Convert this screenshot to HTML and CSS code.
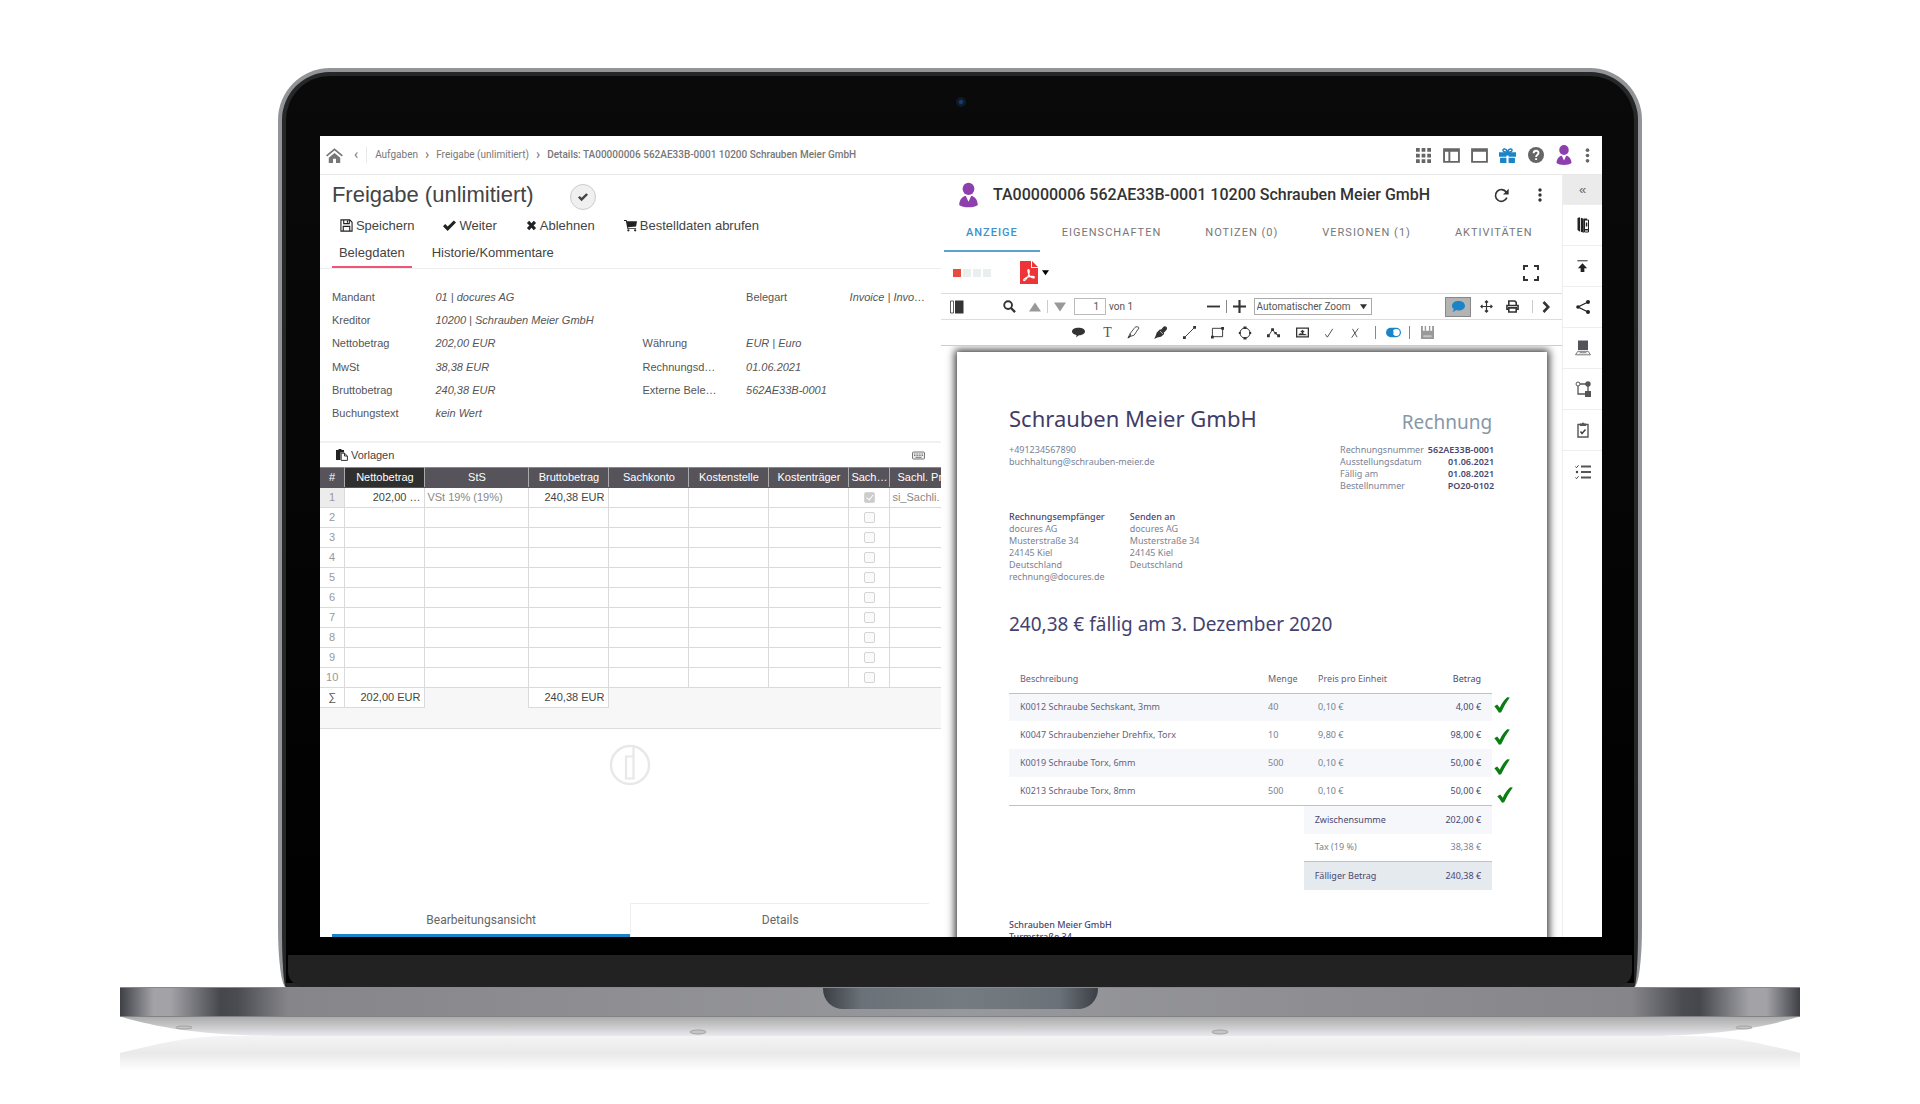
FILE: index.html
```html
<!DOCTYPE html>
<html lang="de">
<head>
<meta charset="utf-8">
<meta name="viewport" content="width=device-width, initial-scale=1">
<title>Freigabe (unlimitiert)</title>
<link rel="stylesheet" href="styles.css">
</head>
<body>
<svg class="sprite" aria-hidden="true">
  <symbol id="home" viewBox="0 0 16 14"><path d="M8 4.6 2.6 9v5h4v-4h2.800v4h4V9z" fill="currentColor"/><path d="M.6 7.400 8 1.300l7.400 6.100" fill="none" stroke="currentColor" stroke-width="1.600"/></symbol>
  <symbol id="person" viewBox="0 0 20 26"><ellipse cx="10" cy="6.500" rx="6.200" ry="6.500" fill="currentColor"/><path d="M6 14h1.200L10 20l2.800-6H14c4 2 5.500 5 5.800 9.500C16 26.700 4 26.700.2 23.500.5 19 2 16 6 14z" fill="currentColor"/></symbol>
  <symbol id="grid" viewBox="0 0 14 14"><path d="M0 0h3.500v3.500H0zM5.250 0h3.500v3.500h-3.500zM10.500 0H14v3.500h-3.500zM0 5.250h3.500v3.500H0zM5.250 5.250h3.500v3.500h-3.500zM10.500 5.250H14v3.500h-3.500zM0 10.500h3.500V14H0zM5.250 10.500h3.500V14h-3.500zM10.500 10.500H14V14h-3.500z" fill="currentColor"/></symbol>
  <symbol id="columns" viewBox="0 0 16 14"><path d="M1 1h14v12H1zM6 3v10M1 2.500h14" fill="none" stroke="currentColor" stroke-width="1.800"/></symbol>
  <symbol id="window" viewBox="0 0 16 14"><path d="M1 1h14v12H1zM1 2.500h14" fill="none" stroke="currentColor" stroke-width="1.800"/></symbol>
  <symbol id="gift" viewBox="0 0 16 14"><path d="M0 4h16v4.200H9V7H7v1.200H0zM1 9.200h6V14H1zM9 9.200h6V14H9z" fill="currentColor"/><path d="M7.500 4C5.500 4 3.500 3.300 3.700 2 4 .4 6.700.3 8 3.600 9.300.3 12 .4 12.300 2c.2 1.300-1.800 2-3.800 2" fill="none" stroke="currentColor" stroke-width="1.400"/></symbol>
  <symbol id="help" viewBox="0 0 16 16"><circle cx="8" cy="8" r="8" fill="currentColor"/><path d="M5.600 6.200C5.600 3 10.500 3 10.500 6c0 1.800-2.400 1.800-2.400 4M8.100 11.300v1.700" fill="none" stroke="#fff" stroke-width="1.900"/></symbol>
  <symbol id="dots" viewBox="0 0 4 14"><circle cx="2" cy="2" r="1.700" fill="currentColor"/><circle cx="2" cy="7" r="1.700" fill="currentColor"/><circle cx="2" cy="12" r="1.700" fill="currentColor"/></symbol>
  <symbol id="check" viewBox="0 0 14 12"><path d="M0 6.800 2.400 4.500 5 7.200 11.600.6 14 2.900 5 11.800z" fill="currentColor"/></symbol>
  <symbol id="cross" viewBox="0 0 12 12"><path d="M1 3.200 3.500.8 6 3.500 8.500.8 11 3.200 8.300 6 11 8.800l-2.500 2.400L6 8.500l-2.500 2.700L1 8.800 3.700 6z" fill="currentColor"/></symbol>
  <symbol id="disk" viewBox="0 0 14 14"><path d="M1 1h9.500L13 3.500V13H1zM3.500 13V8h7v5M4 1v4h6V1M8 2v2" fill="none" stroke="currentColor" stroke-width="1.200"/></symbol>
  <symbol id="cart" viewBox="0 0 14 13"><path d="M0 .5h2.800l.4 1.500H14l-1 5.500-8.600.9.2 1H13v1H3.700L2 1.700H0z" fill="currentColor"/><circle cx="4.700" cy="11.700" r="1.200" fill="currentColor"/><circle cx="12" cy="11.700" r="1.200" fill="currentColor"/></symbol>
  <symbol id="paste" viewBox="0 0 12 12"><path d="M0 1h2.500V0h3v1H8v2.500H4.500V11H0z" fill="#222"/><path d="M5.200 4.200h3.300L11.400 7v4.400H5.200zM8.500 4.200V7h2.900" fill="#fff" stroke="#333" stroke-width="1"/></symbol>
  <symbol id="keyboard" viewBox="0 0 13 8"><rect x=".5" y=".5" width="12" height="7" rx="1" fill="#eee" stroke="#777"/><path d="M2 2.500h9M2 4h9" stroke="#777" stroke-width="1" stroke-dasharray="1 .6"/><path d="M3.500 5.800h6" stroke="#777"/></symbol>
  <symbol id="refresh" viewBox="0 0 14 14"><path d="M12 9a5.500 5.500 0 1 1-.6-5.200" fill="none" stroke="currentColor" stroke-width="1.500"/><path d="M13.700.8v5.300H8.400z" fill="currentColor"/></symbol>
  <symbol id="pdf" viewBox="0 0 18 23"><path d="M0 0h11v7h7v16H0zM12 0l6 6h-6z" fill="#ed3439"/><path d="M8.400 8.500c1.300 0 .8 3.300.2 5.400-.8 2.400-3.200 6-4.700 5.600-1.300-.8 2-3 4.200-3.600 3-.8 6.300-.8 6.200.5-.2 1.300-3.200.2-4.600-1.500C8.200 13 7.300 8.500 8.400 8.500z" fill="none" stroke="#fff" stroke-width="1.200"/></symbol>
  <symbol id="expand" viewBox="0 0 16 16"><path d="M1 5V1h4M11 1h4v4M15 11v4h-4M5 15H1v-4" fill="none" stroke="currentColor" stroke-width="2"/></symbol>
  <symbol id="panel" viewBox="0 0 14 13"><path d="M.5.5h3v12h-3z" fill="none" stroke="currentColor" stroke-width=".8"/><path d="M5 0h8.500v13H5z" fill="currentColor"/></symbol>
  <symbol id="search" viewBox="0 0 14 14"><circle cx="5.500" cy="5.500" r="4.200" fill="none" stroke="currentColor" stroke-width="2"/><path d="m8.600 8.600 4.400 4.400" stroke="currentColor" stroke-width="2.500"/></symbol>
  <symbol id="up" viewBox="0 0 12 9"><path d="M6 0l6 9H0z" fill="#999"/></symbol>
  <symbol id="down" viewBox="0 0 12 9"><path d="M0 0h12L6 9z" fill="#999"/></symbol>
  <symbol id="minus" viewBox="0 0 14 14"><path d="M0 7h14" stroke="currentColor" stroke-width="2"/></symbol>
  <symbol id="plus" viewBox="0 0 14 14"><path d="M0 7h14M7 0v14" stroke="currentColor" stroke-width="2.300"/></symbol>
  <symbol id="caret" viewBox="0 0 8 6"><path d="M0 .5h8L4 6z" fill="currentColor"/></symbol>
  <symbol id="bubble" viewBox="0 0 14 12"><path d="M7 0c4 0 7 2.200 7 5.200S11 10.300 7 10.300c-1 0-2-.2-2.700-.4C3.200 11 1.800 11.700.5 11.600 1.400 10.700 1.900 9.700 1.800 8.500.6 7.600 0 6.500 0 5.200 0 2.200 3 0 7 0z" fill="currentColor"/></symbol>
  <symbol id="comment" viewBox="0 0 14 10"><path d="M7 0c4 0 7 1.700 7 4s-3 4-6.500 4L4.600 10l.2-2.300C2 7.300 0 6 0 4c0-2.300 3-4 7-4z" fill="currentColor"/></symbol>
  <symbol id="move" viewBox="0 0 14 14"><path d="M7 1v12M1 7h12M5.300 2.700 7 1l1.700 1.700M5.300 11.300 7 13l1.700-1.700M2.700 5.300 1 7l1.700 1.700M11.300 5.300 13 7l-1.700 1.700" fill="none" stroke="currentColor" stroke-width="1.300"/></symbol>
  <symbol id="print" viewBox="0 0 14 14"><path d="M3 6V1h6.500L11 2.500V6M3 10H1V6h12v4h-2M3 8.500h8V13H3z" fill="none" stroke="currentColor" stroke-width="1.700"/></symbol>
  <symbol id="chevron" viewBox="0 0 8 12"><path d="m1.500 1 4.800 5-4.800 5" fill="none" stroke="currentColor" stroke-width="2.600"/></symbol>
  <symbol id="marker" viewBox="0 0 14 14"><path d="m3.500 8 5-6.500c1-1 3.500-1 4.500.5L7.500 10 4 11zM3.500 8 1 13l3-2" fill="none" stroke="currentColor" stroke-width=".9"/><path d="m1 13 1.500-3L4 11.500z" fill="currentColor"/></symbol>
  <symbol id="pen" viewBox="0 0 14 14"><path d="m3 7 3.500-3.500 1 .6L9.500 1.500c1.200-1.700 3-1.700 4-.5s.5 3-.8 4L10.500 7.300l.5 1.200L7.500 11.500l-4 .8L.3 14l1.500-3.500z" fill="currentColor"/><path d="m6.500 5.500 3 3" stroke="#fff" stroke-width=".7"/></symbol>
  <symbol id="line" viewBox="0 0 14 14"><path d="M1.500 12.500 12.500 1.500" stroke="currentColor"/><path d="M0 11h3v3H0zM11 0h3v3h-3z" fill="currentColor"/></symbol>
  <symbol id="rect" viewBox="0 0 14 14"><path d="M1.500 2.500h11v9h-11z" fill="none" stroke="currentColor"/><path d="M0 10.500h3v3H0zM11 1h3v3h-3z" fill="currentColor"/></symbol>
  <symbol id="oval" viewBox="0 0 14 14"><circle cx="7" cy="7" r="5" fill="none" stroke="currentColor"/><path d="M5.500.5h3v2.500h-3zM5.500 11h3v2.500h-3zM.8 6h2v2h-2zM11.200 6h2v2h-2z" fill="currentColor"/></symbol>
  <symbol id="poly" viewBox="0 0 14 10"><path d="M1.500 8.500 6 2l3 4 3.500 2.500" fill="none" stroke="currentColor"/><path d="M0 7h3v3H0zM4.500.5h3v3h-3zM8 4.500h2.500V7H8zM11 7h3v3h-3z" fill="currentColor"/></symbol>
  <symbol id="image" viewBox="0 0 14 11"><path d="M.7.700h12.600v9.600H.7z" fill="none" stroke="currentColor" stroke-width="1.400"/><path d="M2 8.500 4.500 6 6 7V5H4.500L7 2.500 9.500 5H8v2h2l2 1.500z" fill="currentColor"/></symbol>
  <symbol id="tick" viewBox="0 0 10 12"><path d="M.5 7.500 3 11 9.500 1" fill="none" stroke="currentColor"/></symbol>
  <symbol id="ex" viewBox="0 0 10 12"><path d="m2 1 5.500 10M9 .5 1 11.500" fill="none" stroke="currentColor"/></symbol>
  <symbol id="toggle" viewBox="0 0 16 10"><rect width="16" height="10" rx="5" fill="#1c84c6"/><circle cx="11" cy="5" r="3.700" fill="#fff"/><circle cx="5" cy="5" r="3" fill="#1c84c6"/></symbol>
  <symbol id="save" viewBox="0 0 14 14"><path d="M0 0h2v5h10V0h2v14H0z" fill="#999"/><path d="M4 0h1.500v5H4zM8.500 0H10v5H8.500z" fill="#999"/><path d="M2.500 10h9v2h-9z" fill="#c4c4c4"/></symbol>
  <symbol id="binder" viewBox="0 0 12 16"><path d="M.5 1 3 .3v14.500L.5 13zM3.800.8l3 1v14l-3-1z" fill="currentColor"/><path d="M7.500 3h4v12h-4z" fill="none" stroke="currentColor" stroke-width="1"/><path d="M7 1.500h3V3H7zM8.800 5.500h1.500v4H8.800zM8 12h3.500v1.500H8z" fill="currentColor"/></symbol>
  <symbol id="upload" viewBox="0 0 12 14"><path d="M.5 0h11v1.500H.5z" fill="#666"/><path d="M6 3.500 11 9H8v4H4V9H1z" fill="currentColor"/></symbol>
  <symbol id="share" viewBox="0 0 14 14"><path d="M12 2 2 7l10 5" fill="none" stroke="currentColor" stroke-width="1.300"/><circle cx="12" cy="2" r="2" fill="currentColor"/><circle cx="2" cy="7" r="1.800" fill="currentColor"/><circle cx="12" cy="12" r="2" fill="currentColor"/></symbol>
  <symbol id="laptop" viewBox="0 0 16 15"><path d="M3 0h10v9.500H3z" fill="#55525a"/><path d="M2.800 10.800h10.400l2.300 3.500H.5z" fill="#f4f4f4" stroke="#777"/><path d="M5 11.300h6l.6 1.400H4.400z" fill="#999"/></symbol>
  <symbol id="flow" viewBox="0 0 16 16"><path d="M5 3h6M3 5v8h7M13 4v8" fill="none" stroke="#555" stroke-width="1.300"/><circle cx="3" cy="3" r="2" fill="#fff" stroke="#555"/><circle cx="13" cy="3" r="2.700" fill="#555"/><path d="M10 10h6v6h-6z" fill="#555"/></symbol>
  <symbol id="clipboard" viewBox="0 0 12 16"><path d="M1 2.500h10v12.500H1z" fill="none" stroke="#555" stroke-width="1.400"/><path d="M3 1.500h2a1 1 0 0 1 2 0h2V4H3z" fill="#555"/><path d="m3.500 9.500 1.500 2 3.500-4" fill="none" stroke="#444" stroke-width="1.500"/></symbol>
  <symbol id="tasks" viewBox="0 0 16 15"><path d="M6 2h10M6 7.500h10M6 13h10" stroke="#555" stroke-width="2"/><path d="m.5 2 1 1.200L3.500.8M.5 13l1 1.200 2-2.400" fill="none" stroke="#444"/><circle cx="2" cy="7.500" r="1.200" fill="#444"/></symbol>
  <symbol id="approved" viewBox="0 0 16 16"><path d="M.3 9.300 3.200 7.500 5.800 10.800C7.500 6.500 10.500 2.500 13.200.3l2.600.2C12.500 5 9.700 10 7.200 15.300l-2.200.5C3.700 13.500 2.200 11.500.3 9.300z" fill="#0b7d13"/></symbol>
  <symbol id="brand" viewBox="0 0 42 42"><circle cx="21" cy="21" r="19" fill="none" stroke="currentColor" stroke-width="2.400"/><path d="M24.500 3v31.500h-7.500V12.500h7.500" fill="none" stroke="currentColor" stroke-width="2.200"/></symbol>
</svg>

<main class="laptop">
  <div class="lid">
    <span class="camera"></span>
    <div class="screen">
      <header class="topbar">
        <nav class="crumbs" aria-label="Pfad">
          <a href="#" class="crumb-home" aria-label="Start"><svg class="i17"><use href="#home"/></svg></a>
          <a href="#" class="crumb-back" aria-label="Zurück">‹</a>
          <a href="#" class="crumb-first">Aufgaben</a><span class="arrow">›</span>
          <a href="#">Freigabe (unlimitiert)</a><span class="arrow">›</span>
          <a href="#" class="crumb-current">Details: TA00000006 562AE33B-0001 10200 Schrauben Meier GmbH</a>
        </nav>
        <div class="top-actions">
          <button aria-label="Apps"><svg class="i15"><use href="#grid"/></svg></button>
          <button aria-label="Spalten"><svg class="i17"><use href="#columns"/></svg></button>
          <button aria-label="Fenster"><svg class="i17"><use href="#window"/></svg></button>
          <button class="blue" aria-label="Neuigkeiten"><svg class="i17"><use href="#gift"/></svg></button>
          <button aria-label="Hilfe"><svg class="i16"><use href="#help"/></svg></button>
          <button class="purple" aria-label="Profil"><svg class="i20"><use href="#person"/></svg></button>
          <button class="slim" aria-label="Menü"><svg class="i15"><use href="#dots"/></svg></button>
        </div>
      </header>

      <div class="body">
        <section class="task">
          <div class="task-title">
            <h1>Freigabe (unlimitiert)</h1>
            <button class="round" aria-label="Erledigt"><svg class="i10"><use href="#check"/></svg></button>
          </div>
          <div class="task-actions">
            <button><svg class="i13"><use href="#disk"/></svg>Speichern</button>
            <button><svg class="i13"><use href="#check"/></svg>Weiter</button>
            <button><svg class="i11"><use href="#cross"/></svg>Ablehnen</button>
            <button><svg class="i13"><use href="#cart"/></svg>Bestelldaten abrufen</button>
          </div>
          <nav class="task-tabs">
            <a href="#" class="active">Belegdaten</a>
            <a href="#">Historie/Kommentare</a>
          </nav>
          <dl class="fields">
            <dt>Mandant</dt><dd class="wide">01 | docures AG</dd><dt class="col5">Belegart</dt><dd>Invoice | Invo…</dd>
            <dt>Kreditor</dt><dd class="full">10200 | Schrauben Meier GmbH</dd>
            <dt>Nettobetrag</dt><dd>202,00 EUR</dd><dt class="col4">Währung</dt><dd>EUR | Euro</dd>
            <dt>MwSt</dt><dd>38,38 EUR</dd><dt class="col4">Rechnungsd…</dt><dd>01.06.2021</dd>
            <dt>Bruttobetrag</dt><dd>240,38 EUR</dd><dt class="col4">Externe Bele…</dt><dd>562AE33B-0001</dd>
            <dt>Buchungstext</dt><dd>kein Wert</dd>
          </dl>
          <div class="templates">
            <button><svg class="i12"><use href="#paste"/></svg>Vorlagen</button>
            <button aria-label="Tastatur"><svg class="i13"><use href="#keyboard"/></svg></button>
          </div>
          <div class="sheet">
            <table class="lines">
              <colgroup><col class="c-num"><col class="c-std"><col class="c-tax"><col class="c-std"><col class="c-std"><col class="c-std"><col class="c-std"><col class="c-chk"><col></colgroup>
              <thead><tr><th>#</th><th class="sorted">Nettobetrag</th><th>StS</th><th>Bruttobetrag</th><th>Sachkonto</th><th>Kostenstelle</th><th>Kostenträger</th><th class="tight">Sach…</th><th class="cut">Sachl. Prüfer</th></tr></thead>
              <tbody>
                <tr><th class="current">1</th><td class="num">202,00 …</td><td class="soft">VSt 19% (19%)</td><td class="num">240,38 EUR</td><td></td><td></td><td></td><td><input type="checkbox" aria-label="Sachlich geprüft 1" checked disabled></td><td class="soft">si_Sachli.</td></tr>
                <tr><th>2</th><td></td><td></td><td></td><td></td><td></td><td></td><td><input type="checkbox" aria-label="Sachlich geprüft 2" disabled></td><td></td></tr>
                <tr><th>3</th><td></td><td></td><td></td><td></td><td></td><td></td><td><input type="checkbox" aria-label="Sachlich geprüft 3" disabled></td><td></td></tr>
                <tr><th>4</th><td></td><td></td><td></td><td></td><td></td><td></td><td><input type="checkbox" aria-label="Sachlich geprüft 4" disabled></td><td></td></tr>
                <tr><th>5</th><td></td><td></td><td></td><td></td><td></td><td></td><td><input type="checkbox" aria-label="Sachlich geprüft 5" disabled></td><td></td></tr>
                <tr><th>6</th><td></td><td></td><td></td><td></td><td></td><td></td><td><input type="checkbox" aria-label="Sachlich geprüft 6" disabled></td><td></td></tr>
                <tr><th>7</th><td></td><td></td><td></td><td></td><td></td><td></td><td><input type="checkbox" aria-label="Sachlich geprüft 7" disabled></td><td></td></tr>
                <tr><th>8</th><td></td><td></td><td></td><td></td><td></td><td></td><td><input type="checkbox" aria-label="Sachlich geprüft 8" disabled></td><td></td></tr>
                <tr><th>9</th><td></td><td></td><td></td><td></td><td></td><td></td><td><input type="checkbox" aria-label="Sachlich geprüft 9" disabled></td><td></td></tr>
                <tr><th>10</th><td></td><td></td><td></td><td></td><td></td><td></td><td><input type="checkbox" aria-label="Sachlich geprüft 10" disabled></td><td></td></tr>
              </tbody>
              <tfoot><tr><th>∑</th><td class="num">202,00 EUR</td><td class="blank"></td><td class="num">240,38 EUR</td><td class="blank" colspan="5"></td></tr></tfoot>
            </table>
          </div>
          <div class="brand"><svg><use href="#brand"/></svg></div>
          <nav class="view-tabs">
            <a href="#" class="active">Bearbeitungsansicht</a>
            <a href="#">Details</a>
          </nav>
        </section>

        <section class="document">
          <header class="doc-head">
            <svg class="avatar"><use href="#person"/></svg>
            <h2>TA00000006 562AE33B-0001 10200 Schrauben Meier GmbH</h2>
            <button aria-label="Aktualisieren"><svg class="i15"><use href="#refresh"/></svg></button>
            <button aria-label="Mehr"><svg class="i14"><use href="#dots"/></svg></button>
          </header>
          <nav class="doc-tabs">
            <a href="#" class="active">ANZEIGE</a>
            <a href="#">EIGENSCHAFTEN</a>
            <a href="#">NOTIZEN (0)</a>
            <a href="#">VERSIONEN (1)</a>
            <a href="#">AKTIVITÄTEN</a>
          </nav>
          <div class="doc-format">
            <span class="steps"><i class="on"></i><i></i><i></i><i></i></span>
            <button class="pdf" aria-label="PDF"><svg class="pdf-icon"><use href="#pdf"/></svg><svg class="i7"><use href="#caret"/></svg></button>
            <button class="expand" aria-label="Vollbild"><svg class="i16"><use href="#expand"/></svg></button>
          </div>
          <div class="bar">
            <div class="bar-group">
              <button class="side" aria-label="Seitenleiste"><svg class="i14"><use href="#panel"/></svg></button>
              <button class="find" aria-label="Suchen"><svg class="i13"><use href="#search"/></svg></button>
              <button aria-label="Vorherige Seite"><svg class="i12"><use href="#up"/></svg></button>
              <span class="sep"></span>
              <button aria-label="Nächste Seite"><svg class="i12"><use href="#down"/></svg></button>
              <label class="pager"><input type="text" value="1" aria-label="Seite">von 1</label>
            </div>
            <div class="bar-group">
              <button aria-label="Verkleinern"><svg class="i13"><use href="#minus"/></svg></button>
              <span class="sep dark"></span>
              <button aria-label="Vergrößern"><svg class="i13"><use href="#plus"/></svg></button>
              <span class="zoom"><select aria-label="Zoom"><option>Automatischer Zoom</option></select><svg class="i7"><use href="#caret"/></svg></span>
            </div>
            <div class="bar-group tools">
              <button class="pressed" aria-label="Kommentare"><svg class="i13"><use href="#bubble"/></svg></button>
              <button aria-label="Verschieben"><svg class="i13"><use href="#move"/></svg></button>
              <button aria-label="Drucken"><svg class="i13"><use href="#print"/></svg></button>
              <span class="sep"></span>
              <button aria-label="Weitere"><svg class="chev"><use href="#chevron"/></svg></button>
            </div>
          </div>
          <div class="bar annotate">
            <button aria-label="Kommentar"><svg class="i13"><use href="#comment"/></svg></button>
            <button class="text-tool">T</button>
            <button aria-label="Marker"><svg class="i13"><use href="#marker"/></svg></button>
            <button aria-label="Stift"><svg class="i13"><use href="#pen"/></svg></button>
            <button aria-label="Linie"><svg class="i13"><use href="#line"/></svg></button>
            <button aria-label="Rechteck"><svg class="i13"><use href="#rect"/></svg></button>
            <button aria-label="Ellipse"><svg class="i14"><use href="#oval"/></svg></button>
            <button aria-label="Polygon"><svg class="i13"><use href="#poly"/></svg></button>
            <button aria-label="Bild"><svg class="i13"><use href="#image"/></svg></button>
            <button aria-label="Haken"><svg class="i10"><use href="#tick"/></svg></button>
            <button aria-label="Kreuz"><svg class="i10"><use href="#ex"/></svg></button>
            <span class="sep dark"></span>
            <button aria-label="Umschalten"><svg class="i15"><use href="#toggle"/></svg></button>
            <span class="sep dark"></span>
            <button aria-label="Sichern"><svg class="i13"><use href="#save"/></svg></button>
          </div>
          <div class="viewer">
            <article class="page">
              <div class="letterhead">
                <div>
                  <h3>Schrauben Meier GmbH</h3>
                  <p>+491234567890<br>buchhaltung@schrauben-meier.de</p>
                </div>
                <div class="meta">
                  <h4>Rechnung</h4>
                  <dl>
                    <dt>Rechnungsnummer</dt><dd>562AE33B-0001</dd>
                    <dt>Ausstellungsdatum</dt><dd>01.06.2021</dd>
                    <dt>Fällig am</dt><dd>01.08.2021</dd>
                    <dt>Bestellnummer</dt><dd>PO20-0102</dd>
                  </dl>
                </div>
              </div>
              <div class="addresses">
                <p><strong>Rechnungsempfänger</strong><br>docures AG<br>Musterstraße 34<br>24145 Kiel<br>Deutschland<br>rechnung@docures.de</p>
                <p><strong>Senden an</strong><br>docures AG<br>Musterstraße 34<br>24145 Kiel<br>Deutschland</p>
              </div>
              <h4 class="due">240,38 € fällig am 3. Dezember 2020</h4>
              <table class="items">
                <colgroup><col><col class="k-qty"><col class="k-price"><col class="k-sum"></colgroup>
                <thead><tr><th>Beschreibung</th><th>Menge</th><th>Preis pro Einheit</th><th class="sum">Betrag</th></tr></thead>
                <tbody>
                  <tr><td class="name">K0012 Schraube Sechskant, 3mm</td><td>40</td><td>0,10 €</td><td class="sum">4,00 €</td></tr>
                  <tr><td class="name">K0047 Schraubenzieher Drehfix, Torx</td><td>10</td><td>9,80 €</td><td class="sum">98,00 €</td></tr>
                  <tr><td class="name">K0019 Schraube Torx, 6mm</td><td>500</td><td>0,10 €</td><td class="sum">50,00 €</td></tr>
                  <tr><td class="name">K0213 Schraube Torx, 8mm</td><td>500</td><td>0,10 €</td><td class="sum">50,00 €</td></tr>
                </tbody>
              </table>
              <table class="totals">
                <tr class="sub"><th>Zwischensumme</th><td>202,00 €</td></tr>
                <tr class="tax"><th>Tax (19 %)</th><td>38,38 €</td></tr>
                <tr class="final"><th>Fälliger Betrag</th><td>240,38 €</td></tr>
              </table>
              <p class="sender">Schrauben Meier GmbH<br>Turmstraße 34</p>
              <svg class="mark mark-1"><use href="#approved"/></svg>
              <svg class="mark mark-2"><use href="#approved"/></svg>
              <svg class="mark mark-3"><use href="#approved"/></svg>
              <svg class="mark mark-4"><use href="#approved"/></svg>
            </article>
          </div>
        </section>

        <aside class="rail">
          <button class="collapse">«</button>
          <button aria-label="Akte"><svg class="i16"><use href="#binder"/></svg></button>
          <button aria-label="Hochladen"><svg class="i13"><use href="#upload"/></svg></button>
          <button aria-label="Teilen"><svg class="i14"><use href="#share"/></svg></button>
          <button aria-label="Arbeitsplatz"><svg class="i16"><use href="#laptop"/></svg></button>
          <button aria-label="Prozess"><svg class="i16"><use href="#flow"/></svg></button>
          <button aria-label="Prüfung"><svg class="i16"><use href="#clipboard"/></svg></button>
          <button aria-label="Aufgabenliste"><svg class="i16"><use href="#tasks"/></svg></button>
        </aside>
      </div>
    </div>
    <div class="chin"></div>
  </div>
  <div class="base"><div class="notch"></div></div>
  <svg class="foot" viewBox="0 0 1680 54" preserveAspectRatio="none" aria-hidden="true">
    <defs>
      <linearGradient id="under" x1="0" y1="0" x2="0" y2="1"><stop offset="0" stop-color="#acacac"/><stop offset=".5" stop-color="#c9c9cb"/><stop offset="1" stop-color="#e9eaee"/></linearGradient>
      <linearGradient id="mirror" x1="0" y1="0" x2="0" y2="1"><stop offset="0" stop-color="#f4f4f4"/><stop offset=".5" stop-color="#e9e9e9"/><stop offset="1" stop-color="#fff"/></linearGradient>
    </defs>
    <path d="M0 36C40 26 70 19 110 19h1460c40 0 70 7 110 17v18H0z" fill="url(#mirror)"/>
    <path d="M2 0h1676c-40 12-90 19-160 19H162C92 19 42 12 2 0z" fill="url(#under)"/>
    <g fill="#c4c4c4" stroke="#a2a2a2"><ellipse cx="64" cy="10.500" rx="8" ry="1.500"/><ellipse cx="578" cy="15" rx="8" ry="2"/><ellipse cx="1100" cy="15" rx="8" ry="2"/><ellipse cx="1624" cy="10.500" rx="8" ry="1.500"/></g>
  </svg>
</main>
</body>
</html>
```
FILE: styles.css
```css
* { box-sizing: border-box; }

body {
  margin: 0;
  background: #fff;
  font-family: "Liberation Sans", Arial, sans-serif;
  font-size: 11px;
  color: #444;
}

h1, h2, h3, h4, p, dl, dd { margin: 0; font-weight: 400; }
a { color: inherit; text-decoration: none; }

button {
  display: inline-flex;
  align-items: center;
  justify-content: center;
  padding: 0;
  border: 0;
  background: none;
  font: inherit;
  color: inherit;
  cursor: pointer;
}

.sprite { position: absolute; width: 0; height: 0; }

svg { display: block; flex: none; }
.i7 { width: 7px; height: 7px; }
.i10 { width: 10px; height: 10px; }
.i11 { width: 11px; height: 11px; }
.i12 { width: 12px; height: 12px; }
.i13 { width: 13px; height: 13px; }
.i14 { width: 14px; height: 14px; }
.i15 { width: 15px; height: 15px; }
.i16 { width: 16px; height: 16px; }
.i17 { width: 17px; height: 17px; }
.i20 { width: 20px; height: 20px; }

/* Laptop frame */
.laptop { width: 87.5%; margin: 68px auto 0; }

.lid {
  position: relative;
  width: 81.2%;
  margin: 0 auto;
  padding: 64px 36px 0 38px;
  background: linear-gradient(#0a0a0a, #000);
  border: 4px solid #929498;
  border-bottom: 0;
  border-radius: 52px 52px 8px 8px / 52px 52px 60px 60px;
  box-shadow: inset 0 0 0 4px #262828;
}

.camera {
  position: absolute;
  top: 25px;
  left: 50%;
  width: 10px;
  height: 10px;
  margin-left: -4px;
  border-radius: 50%;
  background: radial-gradient(#1d3c66 20%, #0c1a2c 40%, #111a24);
}

.chin {
  height: 32px;
  margin: 18px -30px 0 -32px;
  background: #222;
  border-radius: 0 0 16px 16px;
}

.base {
  height: 30px;
  background: linear-gradient(90deg, #3f4046 0, #a2a2a7 2%, #a2a2a7 3%, #46474c 6%, #4b4c51 7%, #85858a 10%, #8e8e93 30%, #98999c 50%, #8e8e93 70%, #85858a 90%, #4b4c51 93%, #46474c 94%, #a2a2a7 97%, #a2a2a7 98%, #3f4046 100%);
  border-top: 1px solid #88898d;
  border-bottom: 1px solid #818286;
}

.notch {
  width: 275px;
  height: 21px;
  margin: 0 auto;
  border-radius: 0 0 20px 20px;
  background: linear-gradient(90deg, #3b3f45, #6b7178 14%, #757c81 50%, #6b7178 86%, #3b3f45);
}

.foot { width: 100%; height: 54px; }

/* Screen */
.screen {
  display: flex;
  flex-direction: column;
  aspect-ratio: 1282 / 801;
  min-height: 0;
  overflow: hidden;
  background: #fff;
}

.topbar {
  display: flex;
  flex: none;
  align-items: center;
  justify-content: space-between;
  height: 39px;
  padding: 0 6px;
  border-bottom: 1px solid #e8e8e8;
  font: 10px/16px Roboto, sans-serif;
  color: #777;
}

.crumbs { display: flex; align-items: center; }
.crumb-back { padding: 0 8px 2px 11px; font-size: 14px; }
.crumb-first { padding-left: 8px; border-left: 1px solid #e8e8e8; }
.arrow { padding: 0 7px 2px; font-size: 14px; }
.crumb-current { font-weight: 500; }

.top-actions { display: flex; align-items: center; gap: 1px; color: #666; }
.top-actions button { width: 27px; }
.top-actions .slim { width: 18px; }
.top-actions .blue { color: #1c84c6; }
.top-actions .purple { color: #8e3fae; }

.body {
  display: grid;
  grid-template-columns: minmax(0, 1fr) minmax(0, 1fr) 40px;
  flex: 1;
  min-height: 0;
}

/* Task pane */
.task { display: flex; flex-direction: column; min-height: 0; overflow: hidden; }

.task-title { display: flex; gap: 36px; align-items: center; height: 37px; padding: 3px 12px 0; }
.task-title h1 { font-size: 22px; line-height: 26px; }

.round {
  width: 26px;
  height: 26px;
  margin-top: 4px;
  border: 1px solid #ccc;
  border-radius: 50%;
  background: #f0f0f0;
}

.task-actions { display: flex; gap: 29px; height: 26px; padding-left: 20px; font-size: 13px; }
.task-actions button { gap: 3px; }
.task-actions svg { color: #222; }

.task-tabs { display: flex; gap: 13px; height: 31px; padding-left: 12px; border-bottom: 1px solid #eee; font-size: 13px; line-height: 30px; }
.task-tabs a { height: 30px; padding: 0 7px; }
.task-tabs .active { border-bottom: 2px solid #ec5575; }

.fields {
  display: grid;
  grid-template-columns: repeat(5, 17%) 1fr;
  grid-template-rows: repeat(6, 1fr);
  align-items: center;
  height: 140px;
  margin: 16px 0 16px 12px;
  white-space: nowrap;
  color: #555;
}
.fields dt { grid-column: 1; }
.fields .col4 { grid-column: 4; }
.fields .col5 { grid-column: 5; }
.fields .full { grid-column: 2 / 5; }
.fields dd { font-style: italic; }

.templates {
  display: flex;
  align-items: center;
  justify-content: space-between;
  height: 26px;
  padding: 0 16px;
  border-top: 2px solid #f1f1f1;
}
.templates button { gap: 3px; }

.sheet { height: 262px; background: #f7f7f7; border-bottom: 1px solid #ddd; }

.lines { width: 100%; table-layout: fixed; border-collapse: collapse; }
.c-num { width: 25px; }
.c-std { width: 80px; }
.c-tax { width: 104px; }
.c-chk { width: 41px; }
.lines th, .lines td {
  height: 20px;
  padding: 0 4px;
  overflow: hidden;
  border: 1px solid #dadada;
  background: #fff;
  line-height: 13px;
  font-weight: 400;
  white-space: nowrap;
}
.lines th { padding: 0; color: #999; }
.lines thead th { background: #56535b; color: #fff; border-color: #8a888d #aaa #56535b; }
.lines thead .sorted { background: #2f2f2f; }
.lines thead .cut { padding-left: 7px; text-align: left; }
.lines tbody .current { background: #ececec; }
.lines .num { text-align: right; }
.lines .soft { padding-left: 2px; color: #888; }
.lines tfoot th { color: #555; }
.lines .blank { border-style: solid none none; background: none; }
.lines tr > :first-child { border-left: 0; }
.lines tr > :last-child { border-right: 0; }

.lines input {
  display: block;
  position: relative;
  appearance: none;
  width: 11px;
  height: 11px;
  margin: 0 auto;
  border: 1px solid #d4d4d4;
  border-radius: 2px;
  background: #fafafa;
}
.lines input:checked { background: #ccc; }
.lines input:checked::after {
  content: "";
  position: absolute;
  top: 0;
  left: 3px;
  width: 3px;
  height: 6px;
  border: solid #fff;
  border-width: 0 1px 1px 0;
  transform: rotate(40deg);
}

.brand { flex: 1; padding-top: 15px; color: #e8e8e8; }
.brand svg { width: 42px; height: 42px; margin: 0 auto; }

.view-tabs {
  display: grid;
  grid-template-columns: 1fr 1fr;
  grid-template-rows: 34px;
  margin: 0 12px;
  font: 12px/33px Roboto, sans-serif;
  text-align: center;
  color: #666;
}
.view-tabs a { border: solid #eee; border-width: 1px 0 0 1px; }
.view-tabs .active { border-bottom: 3px solid #1c84c6; border-left: 0; border-top-color: transparent; }

/* Document pane */
.document { display: flex; flex-direction: column; min-height: 0; font-family: Roboto, sans-serif; }

.doc-head { display: flex; align-items: center; height: 40px; padding: 0 15px 0 18px; color: #333; }
.doc-head h2 { flex: 1; margin-left: 15px; font-size: 16px; line-height: 20px; font-weight: 500; white-space: nowrap; }
.doc-head button { margin-left: 24px; }
.avatar { width: 19px; height: 26px; color: #8e3fae; }

.doc-tabs { display: flex; height: 37px; padding-left: 3px; font-size: 11px; line-height: 35px; letter-spacing: 1px; color: #777; white-space: nowrap; }
.doc-tabs a { padding: 0 22px; }
.doc-tabs .active { color: #3b92cc; border-bottom: 2px solid #5ba2d3; font-weight: 500; }

.doc-format { display: flex; align-items: center; height: 41px; padding: 0 23px 0 12px; }
.steps { display: flex; gap: 2px; }
.steps i { width: 8px; height: 8px; background: #e9eeef; }
.steps .on { background: #e84b3c; }
.pdf { gap: 4px; margin-left: 29px; color: #000; }
.pdf-icon { width: 18px; height: 23px; }
.expand { margin-left: auto; color: #333; }

.bar {
  display: flex;
  flex: none;
  align-items: center;
  justify-content: space-between;
  height: 26px;
  padding: 0 12px 0 9px;
  border-top: 1px solid #ddd;
  font-size: 10px;
  color: #333;
}
.bar-group { display: flex; align-items: center; gap: 6px; }
.side { margin-right: 33px; }
.find { margin-right: 7px; }
.sep { width: 1px; height: 13px; background: #ccc; justify-self: center; }
.sep.dark { background: #888; }

.pager { display: flex; align-items: center; gap: 3px; margin-left: 2px; color: #555; }
.pager input {
  width: 32px;
  height: 17px;
  padding: 0 6px;
  border: 1px solid #bbb;
  border-radius: 0;
  font: inherit;
  color: inherit;
  text-align: right;
}

.zoom { position: relative; margin-left: 2px; }
.zoom select {
  display: block;
  appearance: none;
  width: 118px;
  height: 17px;
  padding: 0 2px;
  border: 1px solid #aaa;
  border-radius: 0;
  background: #fff;
  font: inherit;
  color: #555;
}
.zoom svg { position: absolute; top: 5px; right: 5px; }

.tools { gap: 9px; }
.tools .pressed { width: 26px; height: 20px; border: 1px solid #888; background: #b3b3b3; color: #1c84c6; }
.tools button + button { margin-right: 4px; }
.tools button:last-child { margin: 0; }
.chev { width: 8px; height: 12px; }

.annotate {
  display: grid;
  grid-template-columns: 32px 27px 25px 29px 29px 27px 28px 29px 28px 26px 25px 17px 18px 15px 20px;
  justify-content: start;
  height: 27px;
  padding-left: 121px;
  border-bottom: 1px solid #ccc;
}
.text-tool { font: 14px/14px "Liberation Serif", serif; color: #555; }

.viewer { flex: 1; min-height: 0; overflow: hidden; padding: 6px 15px 0 16px; }

.page {
  position: relative;
  min-height: 600px;
  padding: 53px 55px 0 52px;
  background: #fff;
  box-shadow: 0 0 8px 2px #333;
  font-family: "Noto Sans", sans-serif;
  font-size: 9px;
  line-height: 12px;
  color: #7a8294;
}

.letterhead { display: flex; justify-content: space-between; }
.letterhead h3 { margin-bottom: 13px; font-size: 22px; line-height: 26px; color: #3f3c68; }
.meta { width: 154px; margin-right: -2px; }
.meta h4 { margin: 5px 2px 9px; font-size: 19px; line-height: 25px; text-align: right; color: #8598a8; }
.meta dl { display: grid; grid-template-columns: auto auto; justify-content: space-between; white-space: nowrap; }
.meta dd { text-align: right; font-weight: 600; color: #4a4770; }

.addresses { display: grid; grid-template-columns: 25% 1fr; margin-top: 19px; }
.addresses strong { font-weight: 500; color: #4a4770; }

.due { margin: 28px 0; font-size: 19px; line-height: 26px; color: #45426f; }

.items, .totals { width: 100%; border-collapse: collapse; table-layout: fixed; }
.k-qty { width: 50px; }
.k-price { width: 100px; }
.k-sum { width: 85px; }
.items th, .items td, .totals th, .totals td { height: 28px; padding: 0 11px; font-weight: 400; text-align: left; white-space: nowrap; }
.items th, .items .name { color: #64627c; }
.items tbody tr:nth-child(odd) { background: #f5f7fb; }
.items thead tr, .items tbody tr:last-child { border-bottom: 1px solid #b9c3ce; }
.items td.sum, .items th.sum, .totals td { text-align: right; color: #4a4770; }
.totals { width: 39%; margin-left: auto; color: #4a4770; }
.totals .sub { background: #f5f7fb; }
.totals .tax, .totals .tax td { color: #7d8496; }
.totals .final { border-top: 1px solid #b9c3ce; background: #e5eaee; }
.sender { margin-top: 29px; font-weight: 500; color: #4a4770; }

.mark { position: absolute; right: 37px; width: 16px; height: 16px; }
.mark-1 { top: 345px; }
.mark-2 { top: 377px; }
.mark-3 { top: 407px; }
.mark-4 { top: 435px; right: 34px; }

/* Right rail */
.rail { display: flex; flex-direction: column; border-left: 1px solid #eee; background: #fff; color: #222; }
.rail button { height: 41px; border-bottom: 1px solid #eee; }
.rail .collapse { height: 30px; background: #ebebeb; font-size: 13px; color: #666; }
.rail button:last-child { border-bottom: 0; }
```
